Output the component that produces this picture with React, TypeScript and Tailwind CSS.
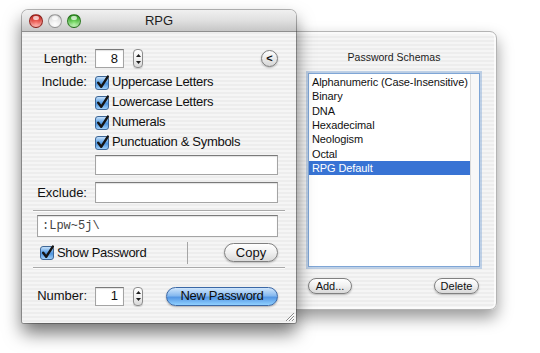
import React from 'react';

const stripes =
  'bg-[repeating-linear-gradient(180deg,#ededed_0px,#ededed_2px,#f5f5f5_2px,#f5f5f5_4px)]';

const CheckBox: React.FC = () => (
  <svg width="15" height="15" viewBox="0 0 15 15" className="shrink-0 overflow-visible">
    <defs>
      <linearGradient id="cbFill" x1="0" y1="0" x2="0" y2="1">
        <stop offset="0" stopColor="#cfe6fb" />
        <stop offset="0.45" stopColor="#5fa2e6" />
        <stop offset="0.55" stopColor="#4f95de" />
        <stop offset="1" stopColor="#a6d4fb" />
      </linearGradient>
    </defs>
    <rect x="0.5" y="1.5" width="13" height="13" rx="2.5" fill="url(#cbFill)" stroke="#3f6796" />
    <path
      d="M3.2 7.8 L6.2 11.8 L12.8 1.6"
      fill="none"
      stroke="#141414"
      strokeWidth="2.4"
      strokeLinecap="round"
      strokeLinejoin="round"
    />
  </svg>
);

const Stepper: React.FC = () => (
  <div className="ml-[9px] w-[10px] h-[19px] rounded-[4px] border border-[#8d8d8d] bg-gradient-to-b from-white via-[#f2f2f2] to-[#d8d8d8] flex flex-col items-center justify-center gap-[4px] shadow-[0_1px_1px_rgba(0,0,0,0.15)]">
    <svg width="5" height="3" viewBox="0 0 5 3">
      <path d="M2.5 0 L5 3 L0 3Z" fill="#1e1e1e" />
    </svg>
    <svg width="5" height="3" viewBox="0 0 5 3">
      <path d="M0 0 L5 0 L2.5 3Z" fill="#1e1e1e" />
    </svg>
  </div>
);

const Field: React.FC<{ className?: string; children?: React.ReactNode }> = ({ className = '', children }) => (
  <div
    className={`bg-white border border-[#a4a4a4] border-t-[#7a7a7a] shadow-[inset_0_1px_1px_rgba(0,0,0,0.12)] flex items-center ${className}`}
  >
    {children}
  </div>
);

const PushButton: React.FC<{ className?: string; children: React.ReactNode }> = ({ className = '', children }) => (
  <div
    className={`rounded-full border border-[#808080] bg-gradient-to-b from-white via-[#f0f0f0] to-[#d9d9d9] shadow-[0_1px_2px_rgba(0,0,0,0.25)] flex items-center justify-center text-[#111] ${className}`}
  >
    {children}
  </div>
);

const Light: React.FC<{ color: string }> = ({ color }) => (
  <div className={`w-[14px] h-[14px] rounded-full border border-black/30 ${color} shadow-[inset_0_-2px_3px_rgba(255,255,255,0.5)] relative`}>
    <div className="absolute left-[3px] top-[1px] w-[6px] h-[4px] rounded-full bg-white/70" />
  </div>
);

const Label: React.FC<{ children: React.ReactNode }> = ({ children }) => (
  <div className="w-[65px] text-right shrink-0">{children}</div>
);

const CheckRow: React.FC<{ label: string }> = ({ label }) => (
  <div className="h-[20px] flex items-center">
    <div className="w-[65px] shrink-0" />
    <div className="ml-[8px] flex items-center gap-[2px]">
      <CheckBox />
      <span className="tracking-[-0.3px]">{label}</span>
    </div>
  </div>
);

const MainWindow: React.FC = () => (
  <div className="relative z-10 w-[274px] h-[313px] shrink-0 rounded-t-[6px] rounded-b-[2px] overflow-hidden flex flex-col shadow-[0_0_0_1px_rgba(0,0,0,0.28),0_10px_18px_rgba(0,0,0,0.55)]">
    {/* title bar */}
    <div className="h-[22px] shrink-0 relative flex items-center justify-center bg-gradient-to-b from-[#f0f0f0] via-[#e0e0e0] to-[#c6c6c6] border-b border-[#8e8e8e]">
      <div className="absolute left-[7px] top-[4px] flex gap-[5px]">
        <Light color="bg-[radial-gradient(circle_at_50%_75%,#ff8a80,#d6362e_60%,#a01810)]" />
        <Light color="bg-[radial-gradient(circle_at_50%_75%,#ffffff,#e2e2e2_60%,#b8b8b8)]" />
        <Light color="bg-[radial-gradient(circle_at_50%_75%,#9cf08c,#3fae2e_60%,#1d7a14)]" />
      </div>
      <span className="text-[13px] text-[#1e1e1e]">RPG</span>
    </div>

    {/* body */}
    <div className={`flex-1 relative flex flex-col text-[13px] text-[#111] ${stripes}`}>
      <div className="mt-[17px] h-[19px] flex items-center">
        <Label>Length:</Label>
        <Field className="ml-[8px] w-[29px] h-[19px] justify-end pr-[5px]">8</Field>
        <Stepper />
        <div className="flex-1" />
        <div className="mr-[18px] w-[17px] h-[17px] rounded-full border border-[#7d7d7d] bg-gradient-to-b from-white to-[#d6d6d6] shadow-[0_1px_2px_rgba(0,0,0,0.25)] flex items-center justify-center text-[11px] font-bold leading-none">
          &lt;
        </div>
      </div>

      <div className="mt-[4px] h-[20px] flex items-center">
        <Label>Include:</Label>
        <div className="ml-[8px] flex items-center gap-[2px]">
          <CheckBox />
          <span className="tracking-[-0.3px]">Uppercase Letters</span>
        </div>
      </div>
      <CheckRow label="Lowercase Letters" />
      <CheckRow label="Numerals" />
      <CheckRow label="Punctuation & Symbols" />

      <div className="mt-[3px] h-[20px] flex">
        <div className="w-[65px] shrink-0" />
        <Field className="ml-[8px] w-[183px] h-[20px]" />
      </div>

      <div className="mt-[7px] h-[21px] flex items-center">
        <Label>Exclude:</Label>
        <Field className="ml-[8px] w-[183px] h-[21px]" />
      </div>

      <div className="mt-[7px] mx-[11px] h-[2px] border-t border-[#a9a9a9] border-b border-b-white/80" />

      <Field className="mt-[3px] ml-[15px] mr-[18px] h-[22px] pl-[4px] font-['Liberation_Mono',monospace] text-[12px] text-[#444]">
        :Lpw~5j\
      </Field>

      <div className="mt-[6px] h-[19px] flex items-center">
        <div className="ml-[18px] w-[147px] flex items-center gap-[2px]">
          <CheckBox />
          <span className="tracking-[-0.3px]">Show Password</span>
        </div>
        <div className="w-px h-[22px] bg-[#a5a5a5]" />
        <div className="flex-1" />
        <PushButton className="mr-[18px] w-[54px] h-[19px]">Copy</PushButton>
      </div>

      <div className="mt-[5px] mx-[11px] h-[2px] border-t border-[#a9a9a9] border-b border-b-white/80" />

      <div className="mt-[17px] h-[20px] flex items-center">
        <Label>Number:</Label>
        <Field className="ml-[8px] w-[29px] h-[19px] justify-end pr-[5px]">1</Field>
        <Stepper />
        <div className="flex-1" />
        <div className="mr-[18px] w-[112px] h-[19px] rounded-full border border-[#3b68a6] bg-[linear-gradient(180deg,#d0e6fc_0%,#86b9ef_45%,#5597e4_55%,#8fd0ff_100%)] shadow-[0_1px_2px_rgba(0,0,0,0.3)] flex items-center justify-center text-[#0d0d0d] tracking-[-0.3px]">
          New Password
        </div>
      </div>

      {/* resize grip */}
      <svg className="absolute right-[1px] bottom-[1px]" width="11" height="11" viewBox="0 0 11 11">
        <path d="M10 2 L2 10 M10 5 L5 10 M10 8 L8 10" stroke="#8a8a8a" strokeWidth="1" />
        <path d="M10 3 L3 10 M10 6 L6 10 M10 9 L9 10" stroke="#ffffff" strokeWidth="1" />
      </svg>
    </div>
  </div>
);

const schemas = [
  'Alphanumeric (Case-Insensitive)',
  'Binary',
  'DNA',
  'Hexadecimal',
  'Neologism',
  'Octal',
  'RPG Default',
];

const Drawer: React.FC = () => (
  <div
    className={`relative z-0 -ml-[6px] mt-[21px] w-[207px] h-[279px] shrink-0 rounded-r-[7px] border border-[#b4b4b4] shadow-[0_8px_16px_rgba(0,0,0,0.4),inset_0_0_0_2px_rgba(255,255,255,0.7)] ${stripes}`}
  >
    <div className="pl-[17px] pt-[18px] flex flex-col w-[189px]">
      <div className="h-[14px] text-center text-[10.5px] leading-[14px] text-[#1c1c1c]">Password Schemas</div>
      <div className="mt-[9px] w-[172px] h-[194px] bg-white border border-[#7fa6d6] shadow-[0_0_0_2px_rgba(126,166,214,0.45)] flex">
        <div className="flex-1 pt-[1px] text-[11px] text-[#111] tracking-[-0.1px]">
          {schemas.map((s) => (
            <div
              key={s}
              className={`h-[14.33px] leading-[14.33px] pl-[3px] whitespace-nowrap ${
                s === 'RPG Default' ? 'bg-[#3873d4] text-white' : ''
              }`}
            >
              {s}
            </div>
          ))}
        </div>
        <div className="w-[9px] border-l border-[#dcdcdc] bg-[#f8f8f8]" />
      </div>
      <div className="mt-[11px] flex justify-between text-[11px]">
        <PushButton className="w-[44px] h-[16px]">Add...</PushButton>
        <PushButton className="w-[45px] h-[16px] mr-[1px]">Delete</PushButton>
      </div>
    </div>
  </div>
);

const App: React.FC = () => {
  return (
    <div className="w-[540px] h-[353px] bg-white overflow-hidden font-['Liberation_Sans',Arial,sans-serif]">
      <div className="flex items-start pl-[22px] pt-[10px]">
        <MainWindow />
        <Drawer />
      </div>
    </div>
  );
};

export default App;
